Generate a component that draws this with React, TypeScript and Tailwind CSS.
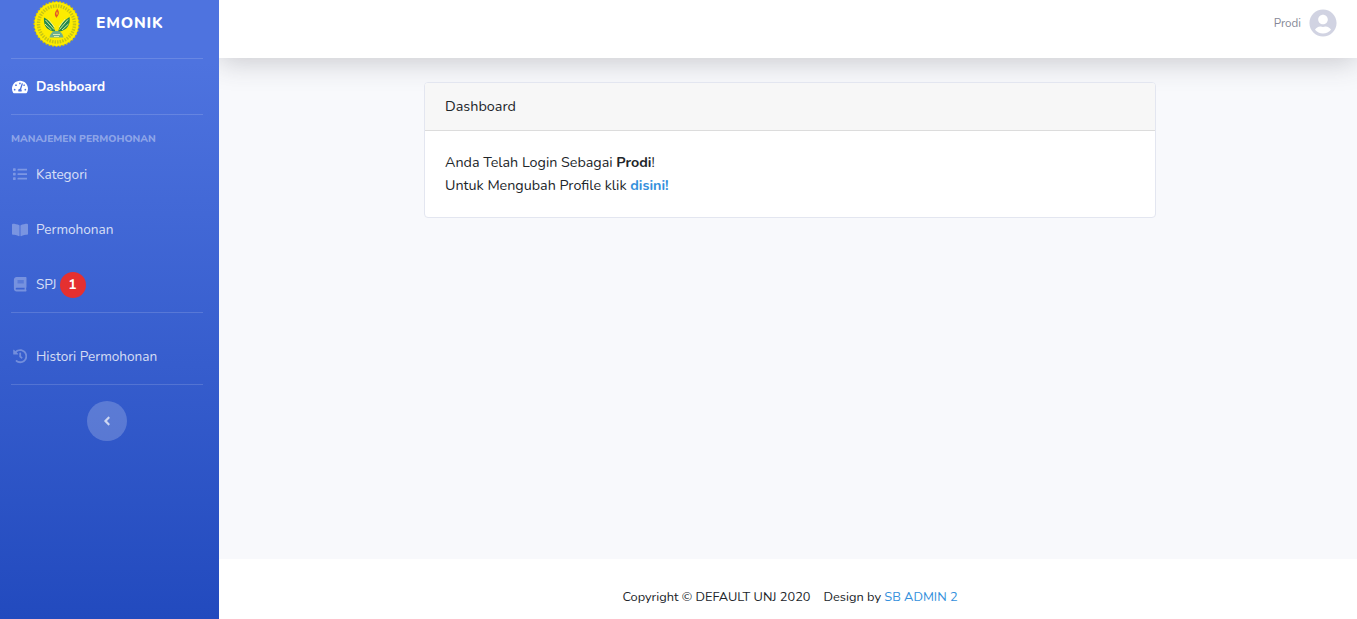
import type { ReactNode } from "react";
import { FaTachometerAlt, FaList, FaBookOpen, FaBook, FaHistory, FaUserCircle, FaAngleLeft } from "react-icons/fa";

function Logo() {
  const teeth = Array.from({ length: 40 }, (_, i) => i * 9);
  return (
    <svg width="47" height="46" viewBox="0 0 47 46" className="shrink-0">
      {teeth.map((a) => (
        <rect key={a} x="22.5" y="0" width="2" height="3" fill="#d3c400" transform={`rotate(${a} 23.5 23)`} />
      ))}
      <circle cx="23.5" cy="23" r="22" fill="#fdec00" />
      <circle cx="23.5" cy="23" r="18" fill="none" stroke="#a9b020" strokeWidth="3.4" strokeDasharray="1.5 1.1" opacity="0.65" />
      <path d="M24 7.5 C26 10 26.5 12 25.3 14 C24.5 15.3 23.8 16 24 17 C22 15.3 21.2 13.2 22.3 11 C23.1 9.6 24 9.2 24 7.5Z" fill="#e2562a" />
      <path d="M24 10.5 C24.8 11.8 24.8 13 24 14.2 C23.2 13 23.2 11.8 24 10.5Z" fill="#fff200" />
      <path d="M22.5 31 C21 25 17 19.5 11 16.5 C10.5 21.5 12 26 15 28 C17 29.5 20 30.5 22.5 31Z" fill="#23894f" />
      <path d="M25 31 C26.5 25 30.5 19.5 36.5 16 C37.5 21.5 35.5 26 32.5 28 C30.5 29.5 27.5 30.5 25 31Z" fill="#23894f" />
      <path d="M12.5 19 L21 28.5 M12 23 L18.5 29 M15.5 18.5 L21.5 26" stroke="#e4f2a6" strokeWidth="0.9" fill="none" />
      <path d="M35 18.5 L26.5 28.5 M35.5 23 L29 29 M32 18 L26 26" stroke="#e4f2a6" strokeWidth="0.9" fill="none" />
      <path d="M16.5 36.5 C17.5 32 20 30 23.5 30 C27 30 29.5 32 30.5 36.5 Z" fill="#6faf90" />
      <path d="M20 33.5 h7 M21 35.5 h5" stroke="#e8f2b0" strokeWidth="0.9" />
    </svg>
  );
}

function NavItem({ icon, label, active, badge }: { icon: ReactNode; label: string; active?: boolean; badge?: string }) {
  return (
    <a className={`flex items-center h-[55px] pl-[12px] text-[13.6px] ${active ? "text-white font-bold" : "text-[#ffffffcc]"}`}>
      <span className={`w-[16px] mr-[8px] flex justify-center ${active ? "text-white" : "text-[#ffffff4d]"}`}>{icon}</span>
      <span className="pt-[1px]">{label}</span>
      {badge && (
        <span className="ml-[3px] w-[26px] h-[26px] rounded-full bg-[#e53030] text-white text-[14px] font-bold flex items-center justify-center">{badge}</span>
      )}
    </a>
  );
}

const Divider = () => <div className="mx-[11px] h-px bg-[#ffffff26]" />;

export default function App() {
  return (
    <div className="flex h-[619px] overflow-hidden font-['Nunito','Noto_Sans','Open_Sans',sans-serif] text-[14.4px] text-[#212529]">
      <aside className="relative z-10 w-[219px] shrink-0 pr-[5px] bg-gradient-to-b from-[#4e73df] from-10% to-[#224abe]">
        <div className="h-[58px] flex items-start pl-[33px] pt-[1px]">
          <Logo />
          <span className="ml-[16px] mt-[11px] text-white font-extrabold text-[15.6px] tracking-[0.8px]">EMONIK</span>
        </div>
        <Divider />
        <NavItem active icon={<FaTachometerAlt className="text-[16px]" />} label="Dashboard" />
        <Divider />
        <div className="pl-[11px] pt-[18px] h-[32px] text-[10.25px] font-extrabold uppercase text-[#ffffff66] leading-[13px]">Manajemen Permohonan</div>
        <NavItem icon={<FaList className="text-[14.4px]" />} label="Kategori" />
        <NavItem icon={<FaBookOpen className="text-[16px]" />} label="Permohonan" />
        <NavItem icon={<FaBook className="text-[14.4px]" />} label="SPJ" badge="1" />
        <Divider />
        <div className="h-[16px]" />
        <NavItem icon={<FaHistory className="text-[14.4px]" />} label="Histori Permohonan" />
        <Divider />
        <div className="flex justify-center pt-[16px]">
          <button className="w-[40px] h-[40px] rounded-full bg-[#ffffff33] text-[#ffffffb3] flex items-center justify-center text-[14px]">
            <FaAngleLeft />
          </button>
        </div>
      </aside>
      <div className="flex-1 flex flex-col min-w-0 bg-[#f8f9fc]">
        <header className="h-[58px] shrink-0 bg-white shadow-[0_4px_28px_0_rgba(58,59,69,0.25)] flex items-center justify-end pr-[20px] pb-[12px]">
          <span className="text-[11.6px] text-[#858796] mr-[8px] pt-[2px]">Prodi</span>
          <FaUserCircle className="text-[28px] text-[#d1d3e2]" />
        </header>
        <main className="flex-1 pt-[24px] pl-[205px]">
          <section className="w-[732px] h-[136px] bg-white border border-[#e3e6f0] rounded-[4px] overflow-hidden">
            <div className="h-[48px] bg-[#f7f7f7] border-b border-[#dcdcdc] px-[20px] flex items-center">Dashboard</div>
            <div className="px-[20px] pt-[20px] leading-[23px] text-[14.3px]">
              <p>Anda Telah Login Sebagai <strong>Prodi</strong>!</p>
              <p>Untuk Mengubah Profile klik <a className="font-bold text-[#3490dc]">disini!</a></p>
            </div>
          </section>
        </main>
        <footer className="h-[60px] shrink-0 bg-white flex items-start justify-center pl-[4px] pt-[29px] text-[12.8px] leading-[18px]">
          <span>Copyright © DEFAULT UNJ 2020</span>
          <span className="ml-[13px]">Design by <a className="text-[#3490dc]">SB ADMIN 2</a></span>
        </footer>
      </div>
    </div>
  );
}
